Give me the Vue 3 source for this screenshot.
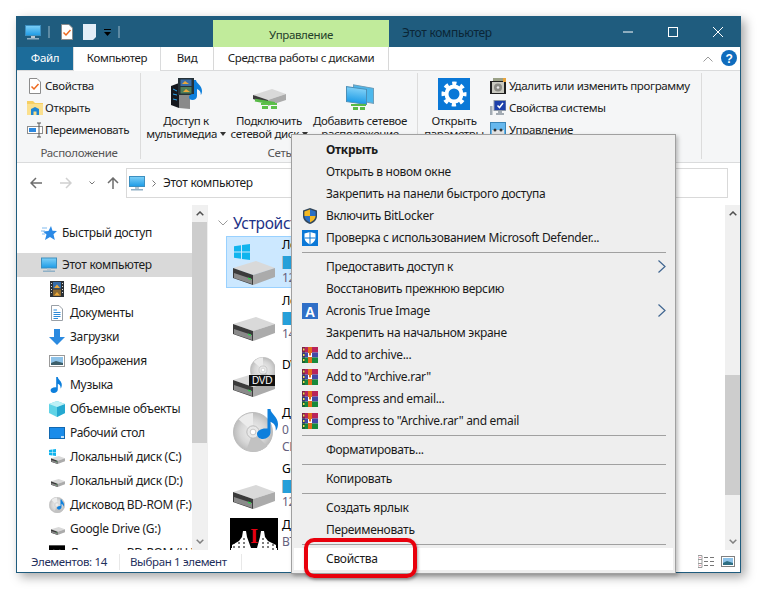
<script setup>
const navRows = [
  { icon: "star", text: "Быстрый доступ", top: true },
  { icon: "pc", text: "Этот компьютер", top: true, active: true },
  { icon: "film", text: "Видео" },
  { icon: "docs", text: "Документы" },
  { icon: "down", text: "Загрузки" },
  { icon: "pics", text: "Изображения" },
  { icon: "note", text: "Музыка" },
  { icon: "cube", text: "Объемные объекты" },
  { icon: "desk", text: "Рабочий стол" },
  { icon: "sysdrive", text: "Локальный диск (C:)" },
  { icon: "navdrive", text: "Локальный диск (D:)" },
  { icon: "navdisc", text: "Дисковод BD-ROM (F:)" },
  { icon: "navdrive", text: "Google Drive (G:)" },
  { icon: "thumb", text: "Дисковод BD-ROM (H:)" },
];

const menu = [
  { text: "Открыть", bold: true },
  { text: "Открыть в новом окне" },
  { text: "Закрепить на панели быстрого доступа" },
  { text: "Включить BitLocker", icon: "uac" },
  { text: "Проверка с использованием Microsoft Defender...", icon: "defender" },
  { sep: true },
  { text: "Предоставить доступ к", more: true },
  { text: "Восстановить прежнюю версию" },
  { text: "Acronis True Image", icon: "acronis", more: true },
  { text: "Закрепить на начальном экране" },
  { text: "Add to archive...", icon: "rar" },
  { text: 'Add to "Archive.rar"', icon: "rar" },
  { text: "Compress and email...", icon: "rar" },
  { text: 'Compress to "Archive.rar" and email', icon: "rar" },
  { sep: true },
  { text: "Форматировать..." },
  { sep: true },
  { text: "Копировать" },
  { sep: true },
  { text: "Создать ярлык" },
  { text: "Переименовать" },
  { sep: true },
  { text: "Свойства", hot: true },
];
</script>

<template>
  <div class="page">
    <svg class="sprite" width="0" height="0">
      <defs>
        <linearGradient id="scr" x1="0" y1="0" x2="0" y2="1"><stop offset="0" stop-color="#7fd0f7" /><stop offset="1" stop-color="#1c9be6" /></linearGradient>
        <radialGradient id="cd" cx="0.5" cy="0.5" r="0.55"><stop offset="0" stop-color="#f2f2f2" /><stop offset="0.6" stop-color="#d6d6d6" /><stop offset="1" stop-color="#b4b4b4" /></radialGradient>
        <symbol id="pc" viewBox="0 0 16 15">
          <rect x="0.5" y="0.5" width="15" height="10" fill="url(#scr)" stroke="#3c8fc0" />
          <rect x="6" y="11" width="4" height="2" fill="#b9c7d1" />
          <rect x="2" y="13" width="12" height="1.5" fill="#8fb0c6" />
        </symbol>
        <symbol id="drive" viewBox="0 0 42 24">
          <path d="M0 7 23 0 42 7 20 14Z" fill="#d9d9d9" />
          <path d="M20 14 42 7V16L20 24Z" fill="#ababab" />
          <path d="M0 7 20 14V24L0 17Z" fill="#3b3b3b" />
          <path d="M1 12 19 18V23L1 17Z" fill="#8a8a8a" />
          <path d="M15 16.5 18 17.5V19L15 18Z" fill="#35d04f" />
        </symbol>
        <symbol id="win" viewBox="0 0 16 16">
          <path d="M0 2.2 7 1.2V7.400H0ZM8 1 16 0V7.400H8ZM0 8.500H7V14.800L0 13.800ZM8 8.500H16V16L8 15Z" fill="#10b4ee" />
        </symbol>
        <symbol id="disc" viewBox="0 0 42 42">
          <circle cx="21" cy="21" r="20.500" fill="url(#cd)" stroke="#bcbcbc" />
          <path d="M21 21 6 8A20 20 0 0 1 21 1Z" fill="#ececec" />
          <path d="M21 21 36 36A20 20 0 0 1 14 40Z" fill="#c2c2c2" />
          <circle cx="21" cy="21" r="6.500" fill="#e8e8e8" stroke="#b8b8b8" />
          <circle cx="21" cy="21" r="3" fill="#fff" stroke="#c4c4c4" />
        </symbol>
        <symbol id="note" viewBox="0 0 16 20">
          <path d="M7 0h2c0 3 5 5 5 10 0 2-.6 3.500-1.500 4.500.3-3-1-5-3.500-6V15.500C9 18 6.500 20 4 20S0 18.500 0 16.500 3 12.500 7 13Z" fill="#0d7fdc" />
        </symbol>
        <symbol id="rar" viewBox="0 0 16 16">
          <rect x="0" y="0" width="16" height="5.500" fill="#b9235a" />
          <rect x="0" y="5.500" width="16" height="5" fill="#4347a6" />
          <rect x="0" y="10.500" width="16" height="5.500" fill="#178a3b" />
          <rect x="0" y="0" width="3" height="16" fill="#222" opacity="0.4" />
          <rect x="1" y="1.500" width="1.500" height="2" fill="#f4e04d" />
          <rect x="1" y="7" width="1.500" height="2" fill="#f4e04d" />
          <rect x="1" y="12" width="1.500" height="2" fill="#f4e04d" />
          <rect x="6" y="0" width="4" height="16" fill="#e46c1a" />
          <path d="M6 6h1v2.500h2V6h1v4H6Z" fill="#fff" />
        </symbol>
        <symbol id="uac" viewBox="0 0 16 16">
          <path d="M8 0 15 2.500V8C15 12 12 14.800 8 16 4 14.800 1 12 1 8V2.500Z" fill="#33475b" />
          <path d="M8 1.500V8H2.400V3.500ZM8 8H13.600C13.400 11 11 13.300 8 14.400Z" fill="#f5b922" />
          <path d="M8 1.500 13.600 3.500V8H8ZM8 8V14.400C5 13.300 2.600 11 2.400 8Z" fill="#2a6fc4" />
        </symbol>
        <symbol id="defender" viewBox="0 0 16 16">
          <rect width="16" height="16" fill="#0a78d7" />
          <path d="M8 2 13.500 3.500V8C13.500 11 11 13 8 14.500 5 13 2.500 11 2.500 8V3.500Z" fill="#fff" />
          <path d="M7.500 2V14.500H8.500V2ZM2.500 7.500V8.500H13.500V7.500Z" fill="#0a78d7" />
        </symbol>
        <symbol id="acronis" viewBox="0 0 16 16">
          <rect width="16" height="16" fill="#2f6fc7" />
          <text x="8" y="13.500" text-anchor="middle" font-size="14" font-weight="700" font-family="Liberation Sans, sans-serif" fill="#fff">A</text>
        </symbol>
        <symbol id="checkdoc" viewBox="0 0 12 16">
          <path d="M.5.5H8L11.500 4V15.500H.5Z" fill="#fff" stroke="#8c8c8c" />
          <path d="M2.500 8.500 5 11 9.500 6" fill="none" stroke="#ee6a1f" stroke-width="1.500" />
        </symbol>
        <symbol id="folder" viewBox="0 0 16 14">
          <path d="M0 0H6L8 2H16V14H0Z" fill="#f6cf63" />
          <path d="M0 3H16V14H0Z" fill="#fbe08e" />
          <path d="M4 14V8L8 6 12 8V14H9.500V10.500H6.500V14Z" fill="#1f86d4" />
        </symbol>
        <symbol id="rename" viewBox="0 0 16 16">
          <rect x="0.500" y="4.500" width="15" height="7" fill="#fff" stroke="#8d8d8d" />
          <rect x="2" y="6" width="7" height="4" fill="#2b88e0" />
          <path d="M10 1H14M12 1V15M10 15H14" stroke="#555" fill="none" />
        </symbol>
        <symbol id="media" viewBox="0 0 33 32">
          <path d="M1 8 9 5V30L1 27Z" fill="#15181e" />
          <path d="M9 9 20 12V31L9 30Z" fill="#8a8a8a" />
          <path d="M3 11 7 13M3 16 7 17M3 21 7 22" stroke="#2aa4f0" />
          <rect x="8" y="0" width="16" height="17" fill="#263238" />
          <rect x="10.500" y="1.500" width="11" height="6.500" fill="#3b6ea8" />
          <rect x="10.500" y="9" width="11" height="6.500" fill="#4d7d5a" />
          <path d="M12 6 15 3 19 6Z" fill="#e9a83a" />
          <path d="M13 14 16 11 20 14Z" fill="#e9a83a" />
          <path d="M24 2h2c0 3 6 5 6 11 0 1.500-.4 3-1.200 4 .2-3-1-5-3.800-6V18c0 2.500-2.200 4-4.500 4S19 20.800 19 19s2-3.500 5-3Z" fill="#0d7fdc" />
        </symbol>
        <symbol id="netdrive" viewBox="0 0 33 21">
          <path d="M0 6 19 0 33 5 15 11Z" fill="#d9d9d9" />
          <path d="M15 11 33 5V11L15 17Z" fill="#ababab" />
          <path d="M0 6 15 11V15L0 10Z" fill="#3c3c3c" />
          <path d="M2 11H22V14H2Z" fill="#57b947" transform="rotate(10 10 12)" />
          <path d="M8 14H24V16H8ZM18 17H24V20H18ZM9 17H15V20H9Z" fill="#5cc04a" />
        </symbol>
        <symbol id="netplace" viewBox="0 0 28 26">
          <rect x="7.500" y="0.500" width="20" height="15" fill="#4db8ec" stroke="#6f9db8" transform="skewY(10) translate(0 -1)" />
          <rect x="0.500" y="2.500" width="20" height="15" fill="url(#scr)" stroke="#4a8fb8" transform="skewY(8)" />
          <path d="M5 20H20V22H5ZM7 23H12V26H7ZM14 23H19V26H14Z" fill="#57b947" />
        </symbol>
        <symbol id="gear" viewBox="0 0 32 32">
          <rect width="32" height="32" fill="#0a78d7" />
          <circle cx="16" cy="16" r="7.500" fill="none" stroke="#fff" stroke-width="4" />
          <circle cx="16" cy="16" r="10.500" fill="none" stroke="#fff" stroke-width="4" stroke-dasharray="4.200 4.050" stroke-dashoffset="2.100" />
        </symbol>
        <symbol id="uninstall" viewBox="0 0 16 16">
          <path d="M3 0H16V4H3Z" fill="#9aa187" />
          <rect x="0" y="3" width="16" height="13" fill="#202020" />
          <rect x="2" y="4" width="12" height="11" fill="#c9c9c0" />
          <circle cx="8" cy="9.500" r="4" fill="#8a8a84" />
          <circle cx="8" cy="9.500" r="1.300" fill="#e8e8e8" />
          <path d="M13 0H16V4H13Z" fill="#e8a33c" />
        </symbol>
        <symbol id="sysprops" viewBox="0 0 16 16">
          <rect x="4" y="0.500" width="12" height="10" fill="#1c3faa" stroke="#8e98a6" />
          <path d="M7.500 5.500 9.500 7.500 13 3" fill="none" stroke="#fff" stroke-width="1.500" />
          <path d="M8 11h4v2h2v2H6v-2h2ZM0 6h2.500v9H0Z" fill="#a3abb3" />
        </symbol>
        <symbol id="manage" viewBox="0 0 16 16">
          <rect x="0.500" y="0.500" width="15" height="15" fill="#66b8ee" stroke="#3b86b8" />
          <path d="M2 8H14V16H2Z" fill="#e4e4e4" />
          <circle cx="5" cy="8" r="1.500" fill="#333" /><circle cx="11" cy="8" r="1.500" fill="#333" />
        </symbol>
        <symbol id="star" viewBox="0 0 16 16">
          <path d="M10 1 11.500 5.800 16 6 12.500 9.200 13.800 15 9 12 4 15 5.500 9.500 2 6.500 7.500 6Z" fill="#2b8ae6" />
          <path d="M1 3H6M0 6H4M1 9H4" stroke="#7fb9ee" />
        </symbol>
        <symbol id="film" viewBox="0 0 14 16">
          <rect width="14" height="16" fill="#2c3136" />
          <rect x="3" y="1" width="8" height="6.500" fill="#356ca8" /><rect x="3" y="8.500" width="8" height="6.500" fill="#8a6a35" />
          <path d="M1 2h1v1H1ZM1 5h1v1H1ZM1 8h1v1H1ZM1 11h1v1H1ZM12 2h1v1h-1ZM12 5h1v1h-1ZM12 8h1v1h-1ZM12 11h1v1h-1Z" fill="#ddd" />
          <path d="M4 7 7 3.500 10 7ZM4 14.500 7 11 10 14.500Z" fill="#e9a83a" />
        </symbol>
        <symbol id="docs" viewBox="0 0 12 16">
          <path d="M.5.5H8L11.500 4V15.500H.5Z" fill="#fff" stroke="#9aa0a6" />
          <path d="M2.500 5H6M2.500 7.500H9.500M2.500 9.500H9.500M2.500 11.500H9.500M2.500 13.500H7" stroke="#2d8ad8" />
        </symbol>
        <symbol id="down" viewBox="0 0 16 16">
          <path d="M5 0H11V8H16L8 16 0 8H5Z" fill="#2b8ae0" />
        </symbol>
        <symbol id="pics" viewBox="0 0 16 12">
          <rect x="0.500" y="0.500" width="15" height="11" fill="#fff" stroke="#9a9a9a" />
          <rect x="2" y="2" width="12" height="8" fill="#8dc2e8" />
          <path d="M2 8 7 6 14 8V10H2Z" fill="#3d5f6b" />
        </symbol>
        <symbol id="cube" viewBox="0 0 16 16">
          <path d="M8 0 16 3V12L8 16 0 12V3Z" fill="#5fd3e6" />
          <path d="M8 6 16 3V12L8 16Z" fill="#25a8d0" />
          <path d="M8 0 16 3 8 6 0 3Z" fill="#bdf0f6" />
        </symbol>
        <symbol id="desk" viewBox="0 0 16 12">
          <rect x="0.500" y="0.500" width="15" height="11" fill="#1a8cea" stroke="#1268b0" />
          <path d="M12 9H15V11H12Z" fill="#bfe1fb" />
        </symbol>
        <symbol id="thumb" viewBox="0 0 48 46">
          <rect width="48" height="46" fill="#000" />
          <path d="M2 30V27L9 23 12 19 13 13H16L17 19 21 30ZM27 30 30 19 31 13H34L35 19 38 23 46 27V30Z" fill="#fff" />
          <path d="M1 30H47V46H1Z" fill="#fff" />
          <path d="M4 24V46M9 24V46M14 20V46M33 20V46M38 24V46M43 26V46" stroke="#000" stroke-dasharray="2 2" />
          <text x="24" y="25" text-anchor="middle" font-size="20" font-weight="700" font-family="Liberation Serif, serif" fill="#e60012">I</text>
        </symbol>
      </defs>
    </svg>

    <div class="window">
      <header class="titlebar">
        <div class="qa">
          <svg class="qa-pc"><use href="#pc" /></svg>
          <i class="qa-sep"></i>
          <svg class="qa-doc"><use href="#checkdoc" /></svg>
          <svg class="qa-blank" viewBox="0 0 13 16"><path d="M0 0H13V13L10 16H0Z" fill="#e3edf7" /></svg>
          <svg class="qa-drop" viewBox="0 0 7 7"><path d="M0 0H7V1H0ZM0 3H7L3.500 7Z" fill="#000" /></svg>
          <i class="qa-sep"></i>
        </div>
        <div class="context-tab narrow">Управление</div>
        <div class="title">Этот компьютер</div>
        <div class="controls">
          <svg width="10" height="10" viewBox="0 0 10 10"><path d="M0 5H10" stroke="#fff" /></svg>
          <svg width="10" height="10" viewBox="0 0 10 10"><rect x="0.500" y="0.500" width="9" height="9" fill="none" stroke="#fff" /></svg>
          <svg width="10" height="10" viewBox="0 0 10 10"><path d="M0 0 10 10M10 0 0 10" stroke="#fff" /></svg>
        </div>
      </header>

      <nav class="tabs narrow">
        <div class="tab file">Файл</div>
        <div class="tab current">Компьютер</div>
        <div class="tab view">Вид</div>
        <div class="tab tools">Средства работы с дисками</div>
        <svg class="collapse" width="10" height="6" viewBox="0 0 10 6"><path d="M.5 5.500 5 1 9.500 5.500" fill="none" stroke="#9a9a9a" /></svg>
        <svg class="help" width="16" height="16" viewBox="0 0 16 16">
          <circle cx="8" cy="8" r="8" fill="#0f6cbd" />
          <text x="8" y="12.500" text-anchor="middle" font-size="12" font-weight="700" font-family="Liberation Sans, sans-serif" fill="#fff">?</text>
        </svg>
      </nav>

      <section class="ribbon narrow">
        <div class="group g1">
          <div class="group-body column">
            <div class="small"><svg><use href="#checkdoc" /></svg>Свойства</div>
            <div class="small"><svg><use href="#folder" /></svg>Открыть</div>
            <div class="small"><svg><use href="#rename" /></svg>Переименовать</div>
          </div>
          <div class="group-label">Расположение</div>
        </div>
        <div class="group g2">
          <div class="group-body">
            <div class="large w80">
              <div class="large-icon"><svg width="33" height="32"><use href="#media" /></svg></div>
              <span>Доступ к</span>
              <span>мультимедиа <b class="caret"></b></span>
            </div>
            <div class="large w82">
              <div class="large-icon"><svg width="33" height="21"><use href="#netdrive" /></svg></div>
              <span>Подключить</span>
              <span>сетевой диск <b class="caret"></b></span>
            </div>
            <div class="large w98">
              <div class="large-icon"><svg width="28" height="26"><use href="#netplace" /></svg></div>
              <span>Добавить сетевое</span>
              <span>расположение</span>
            </div>
          </div>
          <div class="group-label">Сеть</div>
        </div>
        <div class="group g3">
          <div class="group-body">
            <div class="large w72">
              <div class="large-icon"><svg width="32" height="32"><use href="#gear" /></svg></div>
              <span>Открыть</span>
              <span>параметры</span>
            </div>
            <div class="column">
              <div class="small tight"><svg><use href="#uninstall" /></svg>Удалить или изменить программу</div>
              <div class="small tight"><svg><use href="#sysprops" /></svg>Свойства системы</div>
              <div class="small tight"><svg><use href="#manage" /></svg>Управление</div>
            </div>
          </div>
          <div class="group-label">Система</div>
        </div>
      </section>

      <div class="address-row">
        <svg class="back" width="12" height="12" viewBox="0 0 12 12"><path d="M6 1 1 6 6 11M1 6H12" fill="none" stroke="#6d6d6d" stroke-width="1.500" /></svg>
        <svg class="forward" width="12" height="12" viewBox="0 0 12 12"><path d="M6 1 11 6 6 11M11 6H0" fill="none" stroke="#d0d0d0" stroke-width="1.500" /></svg>
        <svg class="recent" width="6" height="4" viewBox="0 0 6 4"><path d="M.5.5 3 3 5.500.5" fill="none" stroke="#777" /></svg>
        <svg class="up" width="12" height="12" viewBox="0 0 12 12"><path d="M1 6 6 1 11 6M6 1V12" fill="none" stroke="#6d6d6d" stroke-width="1.500" /></svg>
        <div class="address">
          <svg class="addr-pc"><use href="#pc" /></svg>
          <svg class="addr-arrow" width="4" height="7" viewBox="0 0 4 7"><path d="M.5.5 3.500 3.500.5 6.500" fill="none" stroke="#777" /></svg>
          <span>Этот компьютер</span>
        </div>
      </div>

      <div class="main">
        <aside class="nav">
          <div v-for="row in navRows" :key="row.text" class="nav-row" :class="{ top: row.top, active: row.active }">
            <svg v-if="row.icon === 'sysdrive'" class="nav-icon" viewBox="0 0 16 16">
              <use href="#win" x="0" y="0" width="7" height="7" />
              <use href="#drive" x="2" y="7" width="14" height="8" />
            </svg>
            <svg v-else-if="row.icon === 'navdrive'" class="nav-icon" viewBox="0 0 16 16"><use href="#drive" x="2" y="6" width="14" height="8" /></svg>
            <svg v-else-if="row.icon === 'navdisc'" class="nav-icon" viewBox="0 0 16 16">
              <use href="#disc" width="16" height="16" />
              <use href="#note" x="8" y="2" width="8" height="11" />
            </svg>
            <svg v-else class="nav-icon"><use :href="'#' + row.icon" /></svg>
            <span>{{ row.text }}</span>
          </div>
        </aside>
        <div class="scrollbar">
          <svg class="arrow" width="8" height="5" viewBox="0 0 8 5"><path d="M.7 4.300 4 1 7.300 4.300" fill="none" stroke="#505050" stroke-width="1.500" /></svg>
          <div class="thumb nav-thumb"></div>
          <svg class="arrow end" width="8" height="5" viewBox="0 0 8 5"><path d="M.7.7 4 4 7.300.7" fill="none" stroke="#808080" stroke-width="1.500" /></svg>
        </div>
        <section class="content">
          <div class="heading">
            <svg width="10" height="6" viewBox="0 0 10 6"><path d="M.5.5 5 5 9.500.5" fill="none" stroke="#9a9a9a" /></svg>
            <span>Устройства и диски</span>
          </div>

          <div class="tile selected">
            <div class="tile-icon"><svg class="win-big"><use href="#win" /></svg><svg class="drive-big"><use href="#drive" /></svg></div>
            <div class="tile-text"><div>Локальный диск (C:)</div><div class="bar"></div><div class="sub">12,4 ГБ свободно</div></div>
          </div>
          <div class="tile">
            <div class="tile-icon"><svg class="drive-big"><use href="#drive" /></svg></div>
            <div class="tile-text"><div>Локальный диск (D:)</div><div class="bar"></div><div class="sub">14,1 ГБ свободно</div></div>
          </div>
          <div class="tile">
            <div class="tile-icon">
              <svg class="dvd" viewBox="0 0 42 44">
                <use href="#disc" x="17" y="4" width="26" height="26" />
                <use href="#drive" x="0" y="20" width="42" height="24" />
                <rect x="16" y="22" width="26" height="11" fill="#111" />
                <text x="29" y="31" text-anchor="middle" font-size="10" font-family="Liberation Sans, sans-serif" fill="#fff">DVD</text>
              </svg>
            </div>
            <div class="tile-text single"><div>DVD RW дисковод</div></div>
          </div>
          <div class="tile">
            <div class="tile-icon">
              <svg class="music-disc" viewBox="0 0 48 44">
                <use href="#disc" x="0" y="4" width="40" height="40" />
                <use href="#note" x="24" y="0" width="24" height="32" />
              </svg>
            </div>
            <div class="tile-text"><div>Дисковод BD-ROM (F:)</div><div class="sub plain">0 байт</div><div class="sub plain">CDFS</div></div>
          </div>
          <div class="tile">
            <div class="tile-icon"><svg class="drive-big"><use href="#drive" /></svg></div>
            <div class="tile-text"><div>Google Drive (G:)</div><div class="bar"></div><div class="sub">12,9 ГБ свободно</div></div>
          </div>
          <div class="tile">
            <div class="tile-icon"><svg class="thumb-big"><use href="#thumb" /></svg></div>
            <div class="tile-text"><div>Дисковод BD-ROM (H:)</div><div class="sub plain">ВТ</div></div>
          </div>
        </section>
        <div class="scrollbar">
          <svg class="arrow" width="8" height="5" viewBox="0 0 8 5"><path d="M.7 4.300 4 1 7.300 4.300" fill="none" stroke="#505050" stroke-width="1.500" /></svg>
          <div class="thumb main-thumb"></div>
          <svg class="arrow end" width="8" height="5" viewBox="0 0 8 5"><path d="M.7.7 4 4 7.300.7" fill="none" stroke="#808080" stroke-width="1.500" /></svg>
        </div>
      </div>

      <footer class="status narrow">
        <span class="s1">Элементов: 14</span>
        <span class="s2">Выбран 1 элемент</span>
        <div class="views">
          <svg width="16" height="13" viewBox="0 0 16 13">
            <path d="M0 .5H4V4.500H0ZM0 4.500H4V8.500H0ZM0 8.500H4V12.500H0Z" fill="#fff" stroke="#9a9a9a" />
            <path d="M1.500 2H2.500V3H1.500ZM1.500 10H2.500V11H1.500Z" fill="#cf3a5e" />
            <path d="M6 2.500H10M12 2.500H16M6 6.500H10M12 6.500H16M6 10.500H10M12 10.500H16" stroke="#777" />
          </svg>
          <svg width="14" height="11" viewBox="0 0 14 11">
            <rect x="0.500" y="0.500" width="13" height="10" fill="#fff" stroke="#808080" />
            <rect x="2" y="2" width="10" height="7" fill="#8dc2e8" />
            <path d="M2 7 6 5 12 7V9H2Z" fill="#2f6f83" />
          </svg>
        </div>
      </footer>

      <div class="menu">
        <template v-for="(item, i) in menu" :key="i">
          <div v-if="item.sep" class="menu-sep"></div>
          <div v-else class="menu-item" :class="{ bold: item.bold, hot: item.hot }">
            <svg v-if="item.icon" class="menu-icon"><use :href="'#' + item.icon" /></svg>
            <span>{{ item.text }}</span>
            <svg v-if="item.more" class="more" width="8" height="13" viewBox="0 0 8 13"><path d="M.5.5 7 6.500.5 12.500" fill="none" stroke="#3f6590" stroke-width="1.200" /></svg>
          </div>
        </template>
      </div>
      <div class="callout"></div>
    </div>
  </div>
</template>

<style>
html, body { margin: 0; background: #fff; }
</style>

<style scoped>
.page { width: 758px; height: 590px; padding: 16px 17px 17px 16px; box-sizing: border-box; overflow: hidden; background: #fff; }
.sprite { position: absolute; }
.window {
  position: relative;
  width: 725px;
  height: 557px;
  box-sizing: border-box;
  border: 1px solid #1f5c7e;
  background: #fff;
  display: flex;
  flex-direction: column;
  box-shadow: 4px 4px 10px rgba(0, 0, 0, 0.35);
  font: 12px/16px "Noto Sans", sans-serif;
  color: #1c1c1c;
  letter-spacing: -0.3px;
}
.narrow { font-size: 11.5px; letter-spacing: -0.35px; }

.titlebar { height: 30px; background: #1f5c7e; display: flex; flex: none; }
.qa { width: 196px; display: flex; align-items: center; padding-left: 8px; box-sizing: border-box; }
.qa-pc { width: 16px; height: 15px; }
.qa-sep { width: 2px; height: 12px; margin: 0 0 0 7px; background: #5d8aa3; }
.qa-doc { width: 12px; height: 16px; margin-left: 11px; }
.qa-blank { width: 13px; height: 16px; margin-left: 10px; }
.qa-drop { width: 7px; height: 7px; margin-left: 8px; }
.context-tab { width: 176px; margin-top: 3px; background: #c1eb9b; text-align: center; line-height: 29px; color: #24402a; }
.title { margin-left: 13px; line-height: 31px; color: #0b2636; }
.controls { margin-left: auto; display: flex; gap: 35px; align-items: center; padding-right: 17px; height: 30px; }
.controls svg { display: block; }

.tabs { height: 24px; flex: none; display: flex; position: relative; box-sizing: border-box; border-bottom: 1px solid #dadbdc; line-height: 22px; }
.tab { text-align: center; height: 23px; }
.file { width: 56px; background: #1c6c9a; color: #fff; }
.current { width: 88px; height: 24px; box-sizing: border-box; border: 1px solid #dadbdc; border-bottom: none; border-top: none; background: #fff; position: relative; z-index: 1; }
.view { width: 52px; }
.tools { width: 176px; box-sizing: border-box; border-left: 1px solid #d8d8d8; border-right: 1px solid #d8d8d8; }
.collapse { position: absolute; right: 27px; top: 9px; }
.help { position: absolute; right: 3px; top: 3px; }

.ribbon { height: 92px; flex: none; display: flex; background: #f5f6f7; box-sizing: border-box; border-bottom: 1px solid #dadbdc; }
.group { display: flex; flex-direction: column; position: relative; }
.group::after { content: ""; position: absolute; right: 0; top: 2px; bottom: 3px; width: 1px; background: #dcdcdc; }
.g1 { width: 124px; }
.g2 { width: 277px; }
.g3 { width: 284px; }
.group-body { flex: 1; display: flex; }
.column { display: flex; flex-direction: column; padding-top: 4px; }
.group-label { height: 20px; line-height: 22px; text-align: center; color: #555; }
.small { height: 22px; display: flex; align-items: center; padding-left: 10px; white-space: nowrap; }
.small svg { width: 16px; height: 16px; margin-right: 2px; flex: none; }
.small.tight { padding-left: 0; }
.small.tight svg { margin-right: 3px; }
.large { display: flex; flex-direction: column; align-items: center; white-space: nowrap; line-height: 13px; padding-top: 4px; box-sizing: border-box; }
.large-icon { height: 39px; display: flex; align-items: flex-end; justify-content: center; }
.large-icon svg { display: block; margin-bottom: 4px; }
.w80 { width: 80px; margin-left: 5px; }
.w82 { width: 82px; margin-left: 2px; }
.w98 { width: 98px; margin-left: 1px; }
.w72 { width: 72px; }
.caret { display: inline-block; width: 0; height: 0; border: 3px solid transparent; border-top: 4px solid #333; border-bottom: none; vertical-align: 2px; }

.address-row { height: 42px; flex: none; display: flex; align-items: center; box-sizing: border-box; padding: 0 12px 2px 13px; }
.forward { margin-left: 18px; }
.recent { margin-left: 17px; }
.up { margin-left: 12px; }
.address { flex: 1; height: 30px; margin-left: 7px; box-sizing: border-box; border: 1px solid #d9d9d9; display: flex; align-items: center; padding-left: 2px; }
.addr-pc { width: 16px; height: 15px; }
.addr-arrow { margin-left: 7px; }
.address span { margin-left: 7px; }

.main { flex: 1; min-height: 0; display: flex; overflow: hidden; }
.nav { width: 175px; flex: none; padding-top: 16px; box-sizing: border-box; overflow: hidden; }
.nav-row { height: 24px; display: flex; align-items: center; padding-left: 32px; white-space: nowrap; }
.nav-row.top { padding-left: 24px; margin-bottom: 8px; }
.nav-row.top.active { margin-bottom: 0; background: #d9d9d9; }
.nav-icon { width: 16px; height: 16px; margin-right: 5px; flex: none; }
.scrollbar { width: 15px; flex: none; background: #f0f0f0; display: flex; flex-direction: column; align-items: center; position: relative; }
.arrow { margin-top: 6px; flex: none; }
.arrow.end { position: absolute; bottom: 6px; margin: 0; }
.thumb { width: 15px; background: #cdcdcd; position: absolute; }
.nav-thumb { top: 17px; height: 221px; }
.main-thumb { top: 170px; height: 120px; }

.content { flex: 1; min-width: 0; border-left: 1px solid #efefef; padding-left: 18px; overflow: hidden; }
.heading { height: 31px; display: flex; align-items: center; margin-left: -8px; font-size: 15.5px; color: #1e3287; white-space: nowrap; box-sizing: border-box; padding-top: 4px; }
.heading span { margin-left: 5px; }
.tile { width: 90px; height: 52px; margin: 0 0 4px; display: flex; overflow: hidden; white-space: nowrap; box-sizing: border-box; border: 1px solid transparent; position: relative; }
.selected { background: #cce8ff; border-color: #99d1ff; }
.tile-icon { width: 55px; flex: none; position: relative; height: 50px; }
.drive-big { position: absolute; left: 6px; top: 24px; width: 42px; height: 24px; }
.win-big { position: absolute; left: 7px; top: 7px; width: 16px; height: 16px; }
.dvd { position: absolute; left: 6px; top: 4px; width: 42px; height: 44px; }
.music-disc { position: absolute; left: 6px; top: 3px; width: 48px; height: 44px; }
.thumb-big { position: absolute; left: 3px; top: 1px; width: 48px; height: 46px; }
.tile-text { line-height: 16px; color: #000; }
.tile-text.single { padding-top: 8px; }
.bar { height: 13px; width: 200px; box-sizing: border-box; background: #26a0da; border-left: 1px solid #bcbcbc; margin: 3px 0 1px; }
.sub { color: #65607d; }
.sub.plain { margin-top: 1px; }

.status { height: 22px; flex: none; display: flex; align-items: center; position: relative; color: #1f2f5c; padding-top: 1px; box-sizing: border-box; }
.s1 { margin-left: 14px; width: 88px; height: 16px; border-right: 1px solid #e8e8e8; white-space: nowrap; }
.s2 { margin-left: 10px; width: 111px; height: 16px; border-right: 1px solid #e8e8e8; white-space: nowrap; }
.views { margin-left: auto; display: flex; gap: 7px; padding-right: 5px; align-items: center; }
.views svg { display: block; }

.menu { position: absolute; left: 274px; top: 117px; width: 385px; height: 440px; box-sizing: border-box; background: #eeeeee; border: 1px solid #a0a0a0; padding: 4px 2px; z-index: 5; box-shadow: 2px 2px 4px rgba(0, 0, 0, 0.25); }
.menu-item { height: 22px; display: flex; align-items: center; padding-left: 32px; position: relative; white-space: nowrap; color: #1a1a1a; }
.menu-item.bold { font-weight: 700; }
.menu-item.hot { background: #fff; }
.menu-icon { position: absolute; left: 8px; top: 3px; width: 16px; height: 16px; }
.more { position: absolute; right: 7px; top: 4px; }
.menu-sep { height: 1px; margin: 3px 7px 3px 8px; background: #a0a0a0; }
.callout { position: absolute; left: 287px; top: 521px; width: 113px; height: 40px; box-sizing: border-box; border: 4px solid #e8000c; border-radius: 10px; z-index: 6; box-shadow: 1px 2px 3px rgba(0, 0, 0, 0.35); }
</style>
